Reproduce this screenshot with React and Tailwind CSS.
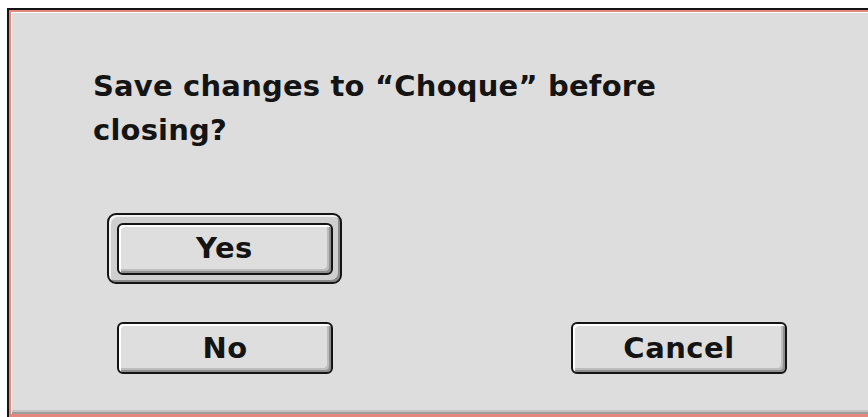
export default function App() {
  const font = { fontFamily: '"DejaVu Sans", "Liberation Sans", sans-serif' };

  const btn =
    "flex items-center justify-center w-[216px] h-[52px] border-2 border-[#141414] rounded-[6px] bg-[#dedede] shadow-[inset_2px_2px_0_#ffffff,inset_-2px_-2px_0_#8e8e8e,inset_-4px_-4px_0_#bdbdbd] text-[#141414] text-[29px] font-bold leading-none tracking-[0.5px]";

  return (
    <div className="w-[868px] h-[417px] bg-white overflow-hidden pt-[8px] pl-[7px]" style={font}>
      {/* window frame: black outline, salmon accent band */}
      <div className="w-[900px] h-[420px] border-t-2 border-l-2 border-[#141414]">
        <div className="h-[407px] border-t-2 border-l-2 border-b-[3px] border-[#e4877f] shadow-[inset_1px_1px_0_#f6c3bd]">
          <div className="h-full bg-[#dddddd] shadow-[inset_1px_1px_0_#ffffff,inset_0_-2px_0_#9c9c9c,inset_0_-4px_0_#c4c4c4] pl-[82px] pt-[52px] flex flex-col">
            <p className="text-[29px] font-bold leading-[44px] text-[#141414] w-[620px] tracking-[0.2px]">
              Save changes to “Choque” before closing?
            </p>

            {/* default button with its ring */}
            <div className="mt-[61px] ml-[14px] w-[235px] h-[71px] border-2 border-[#141414] rounded-[9px] bg-[#cfcfcf] shadow-[inset_2px_2px_0_#f2f2f2,inset_-2px_-2px_0_#8a8a8a] flex items-center justify-center">
              <div className={btn}>Yes</div>
            </div>

            <div className="mt-[38px] ml-[24px] flex gap-[238px]">
              <div className={btn}>No</div>
              <div className={btn}>Cancel</div>
            </div>
          </div>
        </div>
      </div>
    </div>
  );
}
